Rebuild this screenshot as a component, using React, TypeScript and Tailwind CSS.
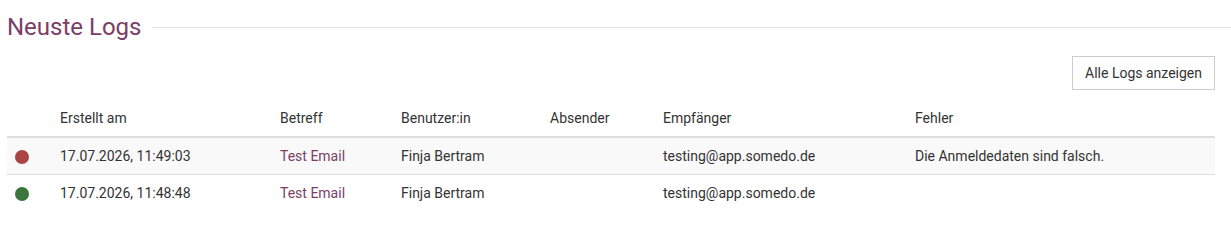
import React from 'react';

const logs = [
  { ok: false, created: '17.07.2026, 11:49:03', subject: 'Test Email', user: 'Finja Bertram', sender: '', recipient: 'testing@app.somedo.de', error: 'Die Anmeldedaten sind falsch.' },
  { ok: true, created: '17.07.2026, 11:48:48', subject: 'Test Email', user: 'Finja Bertram', sender: '', recipient: 'testing@app.somedo.de', error: '' },
];

const App: React.FC = () => {
  return (
    <div className="min-h-screen bg-white px-[7px] pt-[14px] text-[14px] text-[#333] font-['Roboto',sans-serif]">
      {/* Title */}
      <div className="flex items-center -mr-[7px]">
        <h2 className="text-[24px] leading-[26px] text-[#7b3e66] font-normal">Neuste Logs</h2>
        <div className="flex-1 ml-[11px] border-t border-[#e5e5e5]"></div>
      </div>

      <div className="flex justify-end mt-[16px] pr-[9px]">
        <button className="h-[34px] px-[12px] border border-[#ccc] bg-white text-[14px] leading-[20px] text-[#333]">
          Alle Logs anzeigen
        </button>
      </div>

      <table className="mt-[10px] w-[1208px] table-fixed border-collapse">
        <thead>
          <tr className="border-b-2 border-[#ddd]">
            <th className="w-[45px] p-[8px] font-normal text-left leading-[20px]"></th>
            <th className="w-[220px] p-[8px] font-normal text-left leading-[20px]">Erstellt am</th>
            <th className="w-[121px] p-[8px] font-normal text-left leading-[20px]">Betreff</th>
            <th className="w-[149px] p-[8px] font-normal text-left leading-[20px]">Benutzer:in</th>
            <th className="w-[113px] p-[8px] font-normal text-left leading-[20px]">Absender</th>
            <th className="w-[252px] p-[8px] font-normal text-left leading-[20px]">Empfänger</th>
            <th className="p-[8px] font-normal text-left leading-[20px]">Fehler</th>
          </tr>
        </thead>
        <tbody>
          {logs.map((log, i) => (
            <tr key={i} className={`border-[#ddd] ${i % 2 === 0 ? 'bg-[#f9f9f9]' : 'bg-white'} ${i === logs.length - 1 ? '' : 'border-b'}`}>
              <td className="p-[8px] leading-[20px]">
                <span className={`block mt-[2px] w-[14px] h-[14px] rounded-full ${log.ok ? 'bg-[#3c763d]' : 'bg-[#a94442]'}`}></span>
              </td>
              <td className="p-[8px] leading-[20px]">{log.created}</td>
              <td className="p-[8px] leading-[20px]">
                <a href="#" className="text-[#7b3e66]">{log.subject}</a>
              </td>
              <td className="p-[8px] leading-[20px]">{log.user}</td>
              <td className="p-[8px] leading-[20px]">{log.sender}</td>
              <td className="p-[8px] leading-[20px]">{log.recipient}</td>
              <td className="p-[8px] leading-[20px]">{log.error}</td>
            </tr>
          ))}
        </tbody>
      </table>
    </div>
  );
};

export default App;
